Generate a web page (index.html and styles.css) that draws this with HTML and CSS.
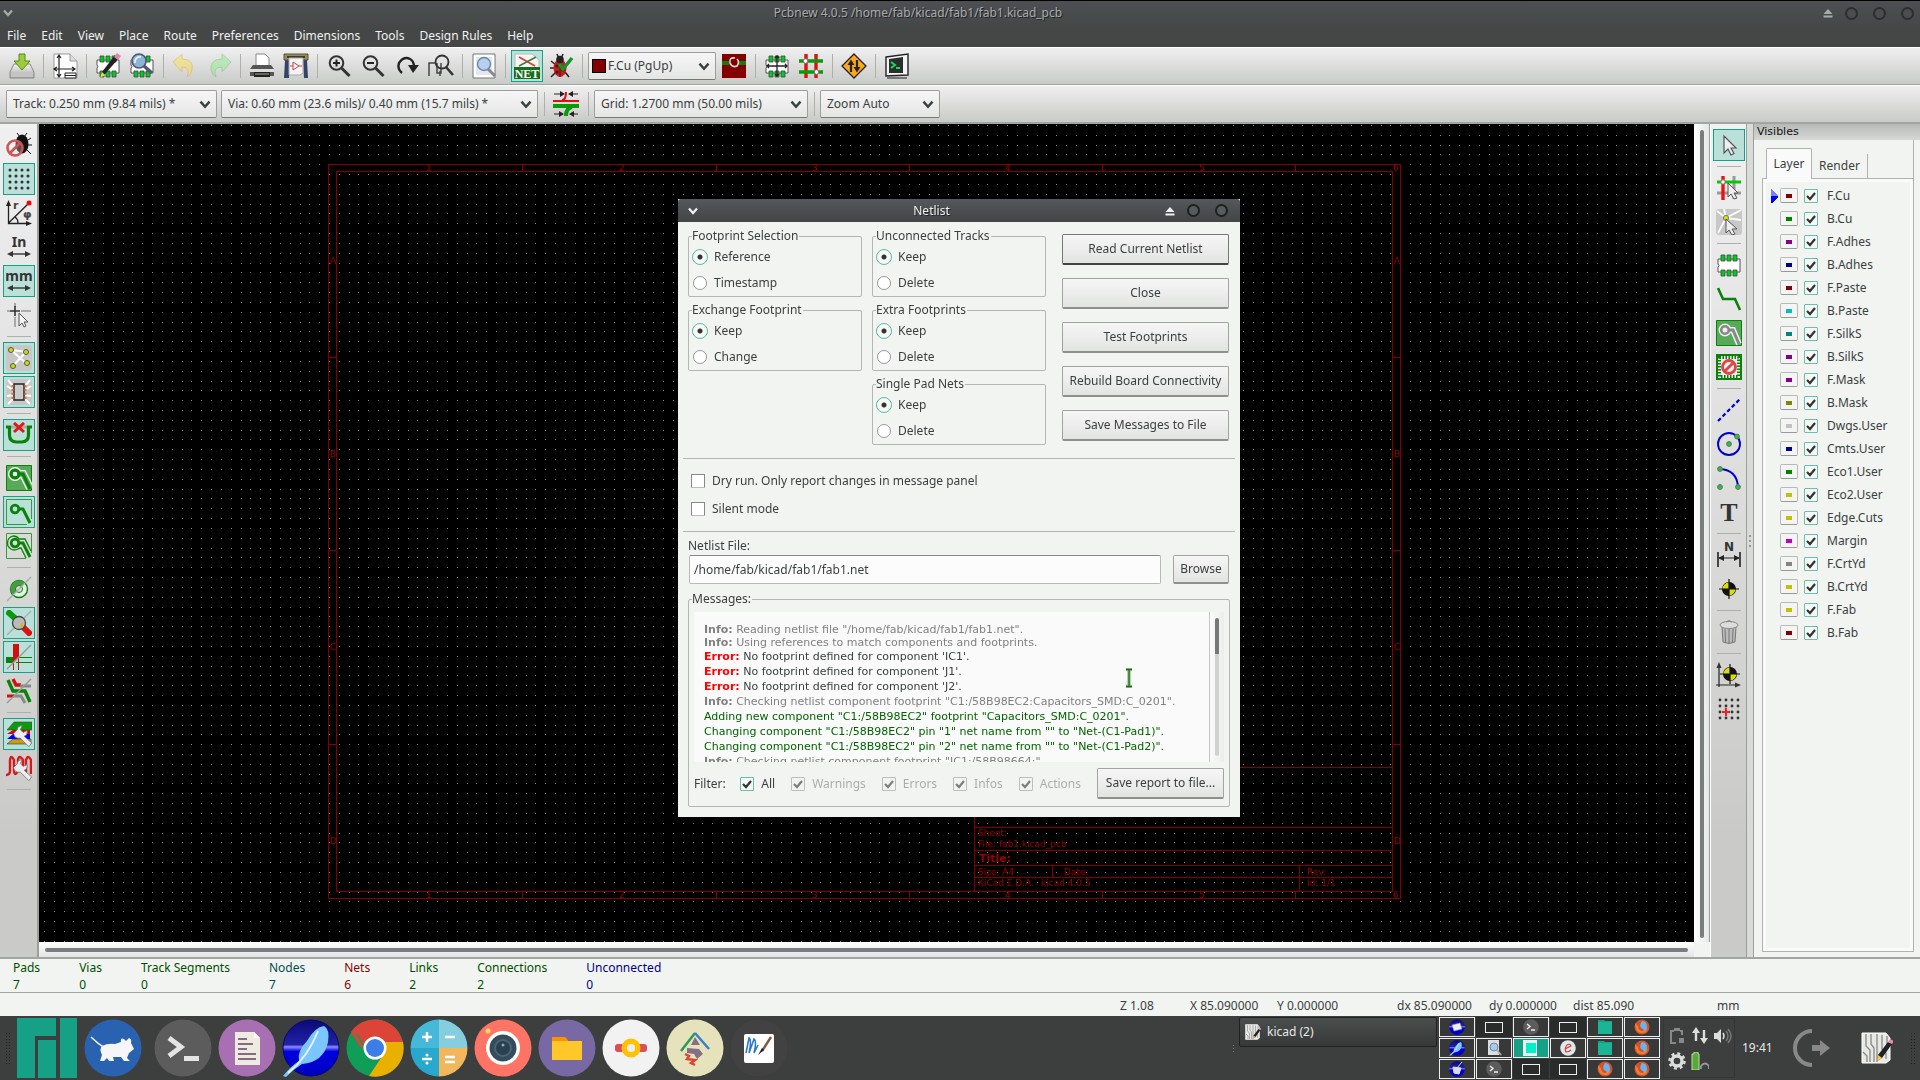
FILE: index.html
```html
<!DOCTYPE html>
<html lang="en">
<head>
<meta charset="utf-8">
<title>Pcbnew 4.0.5 /home/fab/kicad/fab1/fab1.kicad_pcb</title>
<link rel="stylesheet" href="styles.css">
</head>
<body>
<svg class="defs" aria-hidden="true">
  <defs>
    <linearGradient id="blueball" x1="0" y1="0" x2="0" y2="1"><stop offset="0" stop-color="#0a0a78"/><stop offset=".44" stop-color="#2222a8"/><stop offset=".48" stop-color="#8c8cff"/><stop offset=".56" stop-color="#0000e0"/><stop offset="1" stop-color="#0000c0"/></linearGradient>
    <linearGradient id="silver" x1="0" y1="0" x2="0" y2="1"><stop offset="0" stop-color="#f4f4f4"/><stop offset="1" stop-color="#a8a8a8"/></linearGradient>
  </defs>
  <symbol id="chevron" viewBox="0 0 10 8"><path d="M1 1.500l4 4.500 4-4.500" fill="none" stroke="currentColor" stroke-width="2.200"/></symbol>
  <symbol id="eject" viewBox="0 0 10 10"><path d="M5 1l4.500 5h-9zM.5 7.500h9v2h-9z" fill="currentColor"/></symbol>
  <symbol id="pointer" viewBox="0 0 26 26"><path d="M8 4v17l4-4 3 6 3-1.500-3-5.500h5z" fill="#eee" stroke="#555" stroke-width="1.200"/></symbol>
  <symbol id="chip" viewBox="0 0 26 26"><path d="M2 7h22v13H2v-5q2-1 0-3z" fill="#fff" stroke="#555"/><g fill="#0c2" stroke="#444" stroke-width=".8"><path d="M5 3h4v6H5zM11 3h4v6h-4zM17 3h4v6h-4zM5 18h4v6H5zM11 18h4v6h-4zM17 18h4v6h-4z"/></g></symbol>
  <symbol id="lens" viewBox="0 0 26 26"><circle cx="10.500" cy="10" r="6.800" fill="none" stroke="#333" stroke-width="2"/><path d="M15.500 15l8 8" stroke="#333" stroke-width="3"/></symbol>
  <symbol id="target" viewBox="0 0 26 26"><circle cx="13" cy="13" r="7" fill="#111"/><path d="M13 13V6.500A6.500 6.500 0 0 0 6.500 13zM13 13v6.500a6.500 6.500 0 0 0 6.500-6.500z" fill="#dd0"/><path d="M13 3v20M3 13h20" stroke="#111" stroke-width="1.200"/></symbol>
  <symbol id="wrench" viewBox="0 0 26 26"><path d="M11 8q0-4 5-4l-2 4 3 3 4-2q1 5-3 6l8 7-3 4-9-9q-6 1-7-5z" transform="translate(1 1) scale(.95)" fill="#eee" stroke="#777" stroke-width=".9"/></symbol>
  <symbol id="firefox" viewBox="0 0 16 16"><circle cx="8" cy="8" r="7.500" fill="#d4502a"/><path d="M8 2q5 0 5 6 0 4-4 5 2-3-2-4-2-3 1-7z" fill="#6ab4ea"/><path d="M1 4q0 10 7 10 5 0 6-5-2 3-5 3-5 0-5-5z" fill="#f08030"/></symbol>
  <symbol id="folder" viewBox="0 0 16 16"><path d="M1 1h6l1 1h7v13H1z" fill="#16a085"/><path d="M1 3h14v12H1z" fill="#1bb596"/></symbol>
  <symbol id="term" viewBox="0 0 16 16"><circle cx="8" cy="8" r="7.800" fill="#5c5c5c"/><path d="M4 5l3 2.500L4 10M8 11h4" fill="none" stroke="#eee" stroke-width="1.400"/></symbol>
  <symbol id="feather" viewBox="0 0 58 58"><circle cx="29" cy="29" r="28" fill="url(#blueball)" stroke="#06066a"/><path d="M1 57q8-10 16-15-2-10 8-20Q33 8 42 7q6 3 4 16-4 20-26 22Q12 50 4 58z" fill="#7cc6ff"/><path d="M6 54q20-16 30-42" stroke="#e4f6ff" stroke-width="2" fill="none"/></symbol>
  <symbol id="board" viewBox="0 0 32 32"><path d="M1 1h24l4 5v22l-4 3H1z" fill="#e8e8e6" stroke="#fff"/><path d="M5 2v12l4 4v12M10 2v10l3 4v14M16 2v28M21 3v14l4 4v6M26 4v12M2 20l4 4v6" fill="none" stroke="#888" stroke-width="1.300"/><path d="M27 10l4 2-10 14-5 3 1-6z" fill="#222"/><path d="M27 10l2-3 4 2-2 3z" fill="#e8a"/><path d="M17 23l4 3-5 3z" fill="#fc4"/></symbol>
</svg>

<header class="window-head">
  <div class="titlebar">
    <button class="tb-btn" aria-label="Window menu"><svg class="chev"><use href="#chevron"/></svg></button>
    <h1>Pcbnew 4.0.5 /home/fab/kicad/fab1/fab1.kicad_pcb</h1>
    <div class="tb-right">
      <button class="tb-btn shade" aria-label="Shade"><svg class="ej"><use href="#eject"/></svg></button>
      <button class="knob" aria-label="Minimize"></button><button class="knob" aria-label="Maximize"></button><button class="knob" aria-label="Close window"></button>
    </div>
  </div>
  <nav class="menubar">
    <button>File</button><button>Edit</button><button>View</button><button>Place</button><button>Route</button><button>Preferences</button><button>Dimensions</button><button>Tools</button><button>Design Rules</button><button>Help</button>
  </nav>
</header>

<div class="toolbar">
  <button class="tool" aria-label="Save"><svg viewBox="0 0 26 26"><path d="M5 11h16l4 8v6H1v-6z" fill="url(#silver)" stroke="#888"/><path d="M2 19h22v5H2z" fill="#c4c4c4"/><path d="M10 1h6v7h5l-8 9-8-9h5z" fill="#9ccc3c" stroke="#5a8a18"/></svg></button>
  <i class="sep"></i>
  <button class="tool" aria-label="Page settings"><svg viewBox="0 0 26 26"><path d="M2 1h16l7 7v17H2z" fill="#fff" stroke="#999"/><path d="M18 1v7h7" fill="#ddd" stroke="#999"/><path d="M7 3v20M3 16h19M5 5l2-3 2 3M5 21l2 3 2-3M5 14l-3 2 3 2M20 14l3 2-3 2" fill="none" stroke="#222" stroke-width="1.200"/><path d="M13 20h11v5H13zM13 22.500h11" fill="#fff" stroke="#222"/></svg></button>
  <i class="sep"></i>
  <button class="tool" aria-label="Footprint editor"><svg viewBox="0 0 26 26"><use href="#chip"/><path d="M20 2l4 3L10 21l-5 4 2-6z" fill="#222"/><path d="M19 4l3-4 4 3-3 4z" fill="#d8a"/><path d="M7 19l3 3-5 3z" fill="#ed5"/></svg></button>
  <button class="tool" aria-label="Footprint viewer"><svg viewBox="0 0 26 26"><use href="#chip"/><circle cx="10" cy="8" r="7" fill="#8cb4d4" stroke="#557" stroke-width="1.600"/><path d="M6 10a5 5 0 0 1 6-6" stroke="#def" stroke-width="2" fill="none"/><path d="M15 13l8 7" stroke="#557" stroke-width="3.400"/></svg></button>
  <i class="sep"></i>
  <button class="tool faded" aria-label="Undo"><svg viewBox="0 0 26 26"><path d="M1 9l9-8v5q12 0 10 11-1 5-5 7 4-10-5-10v5z" fill="#fd4" stroke="#da3"/></svg></button>
  <button class="tool faded" aria-label="Redo"><svg viewBox="0 0 26 26"><path d="M25 9l-9-8v5Q4 6 5 17q1 5 5 7-4-10 6-10v5z" fill="#8e8" stroke="#6b6"/></svg></button>
  <i class="sep"></i>
  <button class="tool" aria-label="Print"><svg viewBox="0 0 26 26"><path d="M7 1h9l4 4v8H7z" fill="#fff" stroke="#888"/><path d="M4 12h18l3 4v7H1v-7z" fill="#555"/><path d="M1 16h24v3H1z" fill="#ddd"/><path d="M5 19h16v5H5z" fill="#222"/><path d="M6 21h14" stroke="#aaa"/></svg></button>
  <button class="tool" aria-label="Plot"><svg viewBox="0 0 26 26"><path d="M2 7h4v18H1zM20 7h4l1 18h-4z" fill="#346"/><path d="M1 1h24v6H1z" fill="#986" stroke="#553"/><path d="M4 4h18" stroke="#221" stroke-width="1.500"/><path d="M6 5h14v15l-3 2H6z" fill="#f4f4f4" stroke="#aaa"/><path d="M10 9l6 4-6 4zM7 13h3M16 13h3" fill="none" stroke="#c44"/></svg></button>
  <i class="sep"></i>
  <button class="tool" aria-label="Zoom in"><svg viewBox="0 0 26 26"><use href="#lens"/><path d="M10.500 6.500v7M7 10h7" stroke="#222" stroke-width="2"/></svg></button>
  <button class="tool" aria-label="Zoom out"><svg viewBox="0 0 26 26"><use href="#lens"/><path d="M7 10h7" stroke="#222" stroke-width="2"/></svg></button>
  <button class="tool" aria-label="Redraw"><svg viewBox="0 0 26 26"><path d="M8 20Q3 16 5 10q5-7 11-4 4 2 4 8" fill="none" stroke="#222" stroke-width="2.400"/><path d="M14 12h11l-6 8z" fill="#222"/></svg></button>
  <button class="tool" aria-label="Zoom to fit"><svg viewBox="0 0 26 26"><path d="M1 20V10h7M13 10v10h-4V10M1 18v5M12 18v5" fill="none" stroke="#444" stroke-width="1.500"/><circle cx="14" cy="9" r="6.500" fill="none" stroke="#333" stroke-width="1.800"/><path d="M18 14l7 8" stroke="#333" stroke-width="2.600"/></svg></button>
  <i class="sep"></i>
  <button class="tool" aria-label="Find"><svg viewBox="0 0 26 26"><path d="M2 1h22v24H2z" fill="#fff" stroke="#777"/><path d="M5 4h16v18H5z" fill="#e4e8ee"/><circle cx="13" cy="11" r="6.500" fill="#b8d0ee" stroke="#68a" stroke-width="1.400"/><path d="M17 16l7 7" stroke="#888" stroke-width="3"/></svg></button>
  <i class="sep"></i>
  <button class="tool on" aria-label="Read netlist"><svg viewBox="0 0 26 26"><path d="M1 1h17l7 6v8H1z" fill="#f6f6f2" stroke="#bbb"/><path d="M5 4l16 9" stroke="#d33" stroke-width="1.500"/><path d="M5 13l17-9" stroke="#474" stroke-width="1.500"/><path d="M0 14h26v12H0z" fill="#196b1d"/><text x="13" y="24.500" text-anchor="middle" class="net-text">NET</text></svg></button>
  <button class="tool" aria-label="Design rules check"><svg viewBox="0 0 26 26"><path d="M3 8l5 4M2 15h6M3 24l5-5M18 12l4-3M17 19l4 5M9 1l2 5M15 1l-2 5" stroke="#222" stroke-width="1.500"/><ellipse cx="12" cy="15" rx="6.500" ry="9" fill="#d01818"/><circle cx="12" cy="6.500" r="3.800" fill="#222"/><path d="M12 8v16" stroke="#222"/><g fill="#222"><circle cx="9" cy="13" r="1.600"/><circle cx="15" cy="17" r="1.600"/><circle cx="9" cy="19" r="1.600"/></g><path d="M11 11l4 5 9-11" stroke="#18932a" stroke-width="3.400" fill="none"/></svg></button>
  <i class="sep"></i>
  <span class="combo w-layer"><i class="swatch-lg"></i><select aria-label="Active layer"><option>F.Cu (PgUp)</option></select><svg class="chev"><use href="#chevron"/></svg></span>
  <button class="tool" aria-label="Layer pair"><svg viewBox="0 0 26 26"><path d="M1 1h24v24H1z" fill="#840000"/><path d="M1 8h7v4H1zM18 8h7v4h-7z" fill="#0a820a"/><path d="M14 5q-6-1-5 5 2 5 7 3 3-4 0-7" fill="none" stroke="#ddd" stroke-width="1.600"/></svg></button>
  <i class="sep"></i>
  <button class="tool" aria-label="Footprint mode"><svg viewBox="0 0 26 26"><use href="#chip"/><path d="M13 3v20M3 13h20M11 5l2-2 2 2M11 21l2 2 2-2M5 11l-2 2 2 2M21 11l2 2-2 2" fill="none" stroke="#222" stroke-width="1.300"/></svg></button>
  <button class="tool" aria-label="Track mode"><svg viewBox="0 0 26 26"><path d="M8 1v24M18 1v24" stroke="#e01010" stroke-width="3.400"/><path d="M1 8h24M1 19h24" stroke="#0a9a0a" stroke-width="3.400"/><g fill="#fff" stroke="#777"><circle cx="7.500" cy="8" r="2.300"/><circle cx="18.500" cy="19" r="2.300"/></g></svg></button>
  <i class="sep"></i>
  <button class="tool" aria-label="FreeRoute"><svg viewBox="0 0 26 26"><path d="M13 1l12 12-12 12L1 13z" fill="#fba81a" stroke="#222" stroke-width="1.300"/><path d="M10 19v-8M16 7v8" stroke="#222" stroke-width="2.200"/><path d="M6.500 12L10 6.500l3.500 5.500zM12.500 14l3.500 5.500 3.500-5.500z" fill="#222"/></svg></button>
  <i class="sep"></i>
  <button class="tool" aria-label="Scripting console"><svg viewBox="0 0 26 26"><path d="M2 4l22-3v21L2 23z" fill="#f4f4f4" stroke="#222" stroke-width="1.400"/><path d="M5 6l14-2v16H5z" fill="#2a2e2e"/><path d="M7 9l4 3-4 3M12 15h4" fill="none" stroke="#1d5" stroke-width="2"/><path d="M3 25h20" stroke="#777" stroke-width="2"/></svg></button>
</div>

<div class="toolbar second">
  <span class="combo w-track"><select aria-label="Track width"><option>Track: 0.250 mm (9.84 mils) *</option></select><svg class="chev"><use href="#chevron"/></svg></span>
  <span class="combo w-via"><select aria-label="Via size"><option>Via: 0.60 mm (23.6 mils)/ 0.40 mm (15.7 mils) *</option></select><svg class="chev"><use href="#chevron"/></svg></span>
  <i class="sep"></i>
  <button class="tool" aria-label="Auto track width"><svg viewBox="0 0 26 26"><path d="M0 10h26" stroke="#e01010" stroke-width="2"/><path d="M0 15h26" stroke="#0a9a0a" stroke-width="4"/><path d="M9 9q4 0 4-8" fill="none" stroke="#e01010" stroke-width="2"/><path d="M19 16q-6 1-6 9" fill="none" stroke="#0a9a0a" stroke-width="4"/><path d="M1 3h9M25 3h-8M1 23h9M25 23h-8" stroke="#222"/><path d="M7 0l5 3-5 3zM20 0l-5 3 5 3zM6 20l5 3-5 3zM21 20l-5 3 5 3z" fill="#222"/></svg></button>
  <i class="sep"></i>
  <span class="combo w-grid"><select aria-label="Grid"><option>Grid: 1.2700 mm (50.00 mils)</option></select><svg class="chev"><use href="#chevron"/></svg></span>
  <i class="sep"></i>
  <span class="combo w-zoom"><select aria-label="Zoom"><option>Zoom Auto</option></select><svg class="chev"><use href="#chevron"/></svg></span>
</div>

<main class="workspace">
  <aside class="side">
    <button class="tool" aria-label="DRC off"><svg viewBox="0 0 26 26"><path d="M11 1l3 4M21 1l-3 4M22 8l3-2M22 13h4M21 18l4 4" stroke="#111"/><ellipse cx="16" cy="12" rx="6.500" ry="9.500" fill="#111"/><circle cx="9" cy="16" r="7.500" fill="#eee" fill-opacity=".3" stroke="#c55" stroke-width="2.600"/><path d="M4 21L14 11" stroke="#c55" stroke-width="2.600"/></svg></button>
    <button class="tool on" aria-label="Grid"><svg viewBox="0 0 26 26"><path d="M4 4h20M4 10h20M4 16h20M4 22h20" stroke="#333" stroke-width="3" stroke-linecap="round" stroke-dasharray="0 6"/></svg></button>
    <button class="tool" aria-label="Polar coordinates"><svg viewBox="0 0 26 26"><path d="M2.500 4v19.500H22M2.500 23L23 3M9 17q3 2 3 6" fill="none" stroke="#222" stroke-width="1.300"/><path d="M0 6l2.500-6L5 6zM20 21l6 2.500-6 2.500z" fill="#222"/><circle cx="23" cy="3" r="2.500" fill="#f00"/><text x="7" y="9" class="ic-text">r</text><text x="17" y="18" class="ic-text">φ</text></svg></button>
    <button class="tool" aria-label="Inches"><svg viewBox="0 0 26 26"><text x="13" y="13" text-anchor="middle" class="unit-text">In</text><path d="M4 20h18" stroke="#333" stroke-width="1.400"/><path d="M7 17l-6 3 6 3zM19 17l6 3-6 3z" fill="#333"/></svg></button>
    <button class="tool on" aria-label="Millimeters"><svg viewBox="0 0 26 26"><text x="13" y="13" text-anchor="middle" class="unit-text">mm</text><path d="M4 20h18" stroke="#333" stroke-width="1.400"/><path d="M7 17l-6 3 6 3zM19 17l6 3-6 3z" fill="#333"/></svg></button>
    <button class="tool" aria-label="Cursor shape"><svg viewBox="0 0 26 26"><path d="M9 1v4M1 9h3M15 9h10M9 15v10" stroke="#999" stroke-width="1.600"/><path d="M9 4v10M4 9h10" stroke="#333" stroke-width="1.600"/><path d="M13 11v13l3-3 2 4 2-1-2-4h4z" fill="#f4f4f4" stroke="#555"/></svg></button>
    <i class="hsep"></i>
    <button class="tool on" aria-label="Ratsnest"><svg viewBox="0 0 26 26"><rect width="26" height="26" rx="3" fill="#c8c8c8"/><path d="M5 5l18 2M5 5l16 14M7 21L20 7" stroke="#fff" stroke-width="2.200"/><g fill="#c8e000" stroke="#555"><circle cx="5" cy="5" r="2.500"/><circle cx="20" cy="7" r="2.500"/><circle cx="21" cy="18" r="2.500"/><circle cx="7" cy="21" r="2.500"/></g></svg></button>
    <button class="tool on" aria-label="Module ratsnest"><svg viewBox="0 0 26 26"><rect width="26" height="26" rx="3" fill="#c8c8c8"/><path d="M7 7L2 1M7 11L1 7M7 16l-6 1M7 20l-5 5M19 7l5-6M19 11l6-4M19 16l6 1M19 20l5 5" stroke="#fff" stroke-width="2"/><path d="M8 5h10v16H8z" fill="#ccc" stroke="#222" stroke-width="1.400"/><path d="M6.500 6v16M19.500 6v16" stroke="#e07030" stroke-width="2.200" stroke-dasharray="2 2"/></svg></button>
    <i class="hsep"></i>
    <button class="tool on" aria-label="Auto delete track"><svg viewBox="0 0 26 26"><path d="M5 5h16" stroke="#aaa" stroke-width="3"/><path d="M0 5h3.500v8q0 7 7 7h5q7 0 7-7V5H26" fill="none" stroke="#0a820a" stroke-width="3.200"/><path d="M8 1l10 9M18 1L8 10" stroke="#e01818" stroke-width="3"/></svg></button>
    <i class="hsep"></i>
    <button class="tool" aria-label="Show zones"><svg viewBox="0 0 26 26"><path d="M.5.5h25v25H.5z" fill="#5aa85a" stroke="#0a820a"/><path d="M9 9h8l7 14" stroke="#fff" stroke-width="8" fill="none"/><circle cx="9" cy="9" r="7" fill="#fff"/><path d="M9 9h8l7 14" stroke="#5aa85a" stroke-width="5.500" fill="none"/><circle cx="9" cy="9" r="5.800" fill="#5aa85a"/><path d="M12 9h5l7 15" stroke="#0a820a" stroke-width="3" fill="none"/><circle cx="9" cy="9" r="3.800" fill="#fff" stroke="#0a820a" stroke-width="3"/></svg></button>
    <button class="tool on" aria-label="Hide zones"><svg viewBox="0 0 26 26"><path d="M21 25.500H.5V.5h25V20" fill="none" stroke="#3a9a3a"/><path d="M12 10h5l7 14" stroke="#0a820a" stroke-width="3" fill="none"/><circle cx="9" cy="10" r="3.800" fill="none" stroke="#0a820a" stroke-width="2.800"/></svg></button>
    <button class="tool" aria-label="Zone outlines"><svg viewBox="0 0 26 26"><path d="M20 25.500H.5V.5h25V20" fill="none" stroke="#3a9a3a"/><path d="M12 10h5l7 14" stroke="#0a820a" stroke-width="3" fill="none"/><circle cx="9" cy="10" r="3.800" fill="none" stroke="#0a820a" stroke-width="2.800"/><path d="M20 25L15 15q-2 0-3 1-6 3-10-3Q0 5 7 3q4 0 6 3h6l6 12" fill="none" stroke="#0a820a" stroke-width="1.300"/></svg></button>
    <i class="hsep"></i>
    <button class="tool" aria-label="Via sketch"><svg viewBox="0 0 26 26"><circle cx="13" cy="13" r="8.500" fill="#e4f2e4" stroke="#0a820a" stroke-width="1.400"/><path d="M7 19A8 8 0 0 1 19 7z" fill="#4a9a4a"/><circle cx="13" cy="13" r="3.500" fill="#ddd" stroke="#0a820a"/><path d="M1 25L25 1" stroke="#aaa" stroke-width="1.300"/></svg></button>
    <button class="tool on" aria-label="Pad sketch"><svg viewBox="0 0 26 26"><path d="M1 25L25 1" stroke="#aaa" stroke-width="1.300"/><path d="M1 1l10 9" stroke="#0a9a0a" stroke-width="6"/><path d="M15 15l10 10" stroke="#e01010" stroke-width="6"/><circle cx="13" cy="13" r="6.500" fill="#bbb" stroke="#444" stroke-width="1.300"/><path d="M13 16l4-4v6z" fill="#cb2"/></svg></button>
    <button class="tool on" aria-label="Track sketch"><svg viewBox="0 0 26 26"><path d="M0 13h8v6H0z" fill="#0a820a"/><path d="M7 0h6v13l-6 5z" fill="#d01010"/><path d="M13 13.500h13M10 18.500h16" stroke="#0a820a"/><path d="M7.500 17v9M12.500 14v12" stroke="#d01010"/><path d="M1 25L25 1" stroke="#999" stroke-width="1.400"/></svg></button>
    <button class="tool" aria-label="High contrast"><svg viewBox="0 0 26 26"><path d="M7 1l3 6h5" fill="none" stroke="#d01010" stroke-width="3.400"/><path d="M14 8h11M7 18h8l4 7" fill="none" stroke="#888" stroke-width="3"/><path d="M1 18h7" stroke="#d01010" stroke-width="3"/><path d="M2 2l5 11h12l5 11" fill="none" stroke="#0a820a" stroke-width="3.400"/><path d="M1 25L25 1" stroke="#999" stroke-width="1.400"/></svg></button>
    <i class="hsep"></i>
    <button class="tool on" aria-label="Layers manager"><svg viewBox="0 0 26 26"><path d="M7 18h18v5H1z" fill="#caa008" stroke="#333" stroke-width=".6"/><path d="M7 13h17v5H1z" fill="#00f"/><path d="M7 9h17v4H1z" fill="#d00"/><path d="M8 1h18v8H1z" fill="#0a9a0a" stroke="#444" stroke-width=".6"/><use href="#wrench"/></svg></button>
    <button class="tool" aria-label="Microwave toolbar"><svg viewBox="0 0 26 26"><path d="M0 20q4 0 4-4V5q1-6 4 0v11q1 6 4 0V5q1-6 5 0v10M20 18V5q2-6 5 0v14" fill="none" stroke="#d81818" stroke-width="2.400"/><use href="#wrench"/></svg></button>
    <i class="hsep"></i>
  </aside>

  <section class="editor">
    <div class="board-view">
      <canvas id="grid"></canvas>
      <svg class="sheet" width="1655" height="818">
        <g fill="none" stroke="#840000" shape-rendering="crispEdges">
          <path d="M289.500 40.500h1072v734H289.500zM297.500 47.500h1056v720H297.500z"/>
          <path d="M289 233.500h8M289 426.500h8M289 620.500h8M1353 233.500h8M1353 426.500h8M1353 620.500h8M483.500 40v7M677.500 40v7M870.500 40v7M1063.500 40v7M1256.500 40v7M483.500 767v7M677.500 767v7M870.500 767v7M1063.500 767v7M1256.500 767v7"/>
          <path d="M935.500 767V643.500h418M935 703.500h418M935 726.500h418M935 741.500h418M935 753.500h418M1013.500 741v12M1260.500 741v26"/>
        </g>
        <g class="sheet-text">
          <text x="291" y="140">A</text><text x="291" y="333">B</text><text x="291" y="526">C</text><text x="291" y="720">D</text>
          <text x="1355" y="140">A</text><text x="1355" y="333">B</text><text x="1355" y="526">C</text><text x="1355" y="720">D</text>
          <text x="387" y="47">1</text><text x="580" y="47">2</text><text x="773" y="47">3</text><text x="966" y="47">4</text><text x="1160" y="47">5</text><text x="1354" y="47">6</text>
          <text x="387" y="774">1</text><text x="580" y="774">2</text><text x="773" y="774">3</text><text x="966" y="774">4</text><text x="1160" y="774">5</text><text x="1354" y="774">6</text>
          <text x="939" y="712">Sheet:</text><text x="939" y="723">File: fab1.kicad_pcb</text>
          <text x="940" y="738" class="title">Title:</text>
          <text x="939" y="751">Size: A4</text><text x="1025" y="751">Date:</text><text x="1268" y="751">Rev:</text>
          <text x="939" y="762">KiCad E.D.A.</text><text x="1002" y="762">kicad 4.0.5</text><text x="1268" y="762">Id: 1/1</text>
        </g>
      </svg>
    </div>
    <div class="vscroll"><i></i></div>
    <div class="hscroll"><i></i></div>
  </section>

  <aside class="side right">
    <button class="tool on" aria-label="Select"><svg viewBox="0 0 26 26"><use href="#pointer"/></svg></button>
    <i class="hsep"></i>
    <button class="tool" aria-label="Highlight net"><svg viewBox="0 0 26 26"><path d="M18 1v23M1 18h24" stroke="#999" stroke-width="3"/><path d="M7 1v24" stroke="#f01010" stroke-width="3.400"/><path d="M1 7h24" stroke="#0c0" stroke-width="3"/><circle cx="7" cy="7" r="2.200" fill="#fff" stroke="#777"/><path d="M12 8v14l3-3 3 5 3-1-3-5h4z" fill="#eee" stroke="#555"/></svg></button>
    <button class="tool" aria-label="Local ratsnest"><svg viewBox="0 0 26 26"><rect width="26" height="26" rx="3" fill="#c8c8c8"/><path d="M10 9L1 2M10 9l15-8M10 9l15 2M10 9L2 24M10 9L8 0" stroke="#fff" stroke-width="1.800"/><circle cx="10" cy="9" r="2.600" fill="#dde000" stroke="#777"/><path d="M10 10v14l3-3 3 5 3-1-3-5h5z" fill="#eee" stroke="#555"/></svg></button>
    <i class="hsep"></i>
    <button class="tool" aria-label="Add footprint"><svg viewBox="0 0 26 26"><use href="#chip"/></svg></button>
    <button class="tool" aria-label="Add track"><svg viewBox="0 0 26 26"><path d="M2 2l5 11h12l5 11" fill="none" stroke="#0a820a" stroke-width="2.600"/></svg></button>
    <button class="tool" aria-label="Add zone"><svg viewBox="0 0 26 26"><path d="M.5.5h25v25H.5z" fill="#5aa85a" stroke="#0a820a"/><path d="M9 10h8l6 14" stroke="#eee" stroke-width="6" fill="none"/><circle cx="9" cy="10" r="6.500" fill="#eee"/><path d="M12 10h5l6 14" stroke="#888" stroke-width="3" fill="none"/><circle cx="9" cy="10" r="3.800" fill="none" stroke="#888" stroke-width="2.600"/></svg></button>
    <button class="tool" aria-label="Add keepout"><svg viewBox="0 0 26 26"><path d="M1 1h24v24H1z" fill="#eee" stroke="#0a820a" stroke-width="2"/><path d="M3.500 3.500h19v19h-19z" fill="none" stroke="#0a820a" stroke-width="3" stroke-dasharray="1.500 1.500"/><circle cx="13" cy="13" r="6.500" fill="#eee" stroke="#d44" stroke-width="2.800"/><path d="M8 18L18 8" stroke="#d44" stroke-width="2.800"/></svg></button>
    <i class="hsep"></i>
    <button class="tool" aria-label="Add line"><svg viewBox="0 0 26 26"><path d="M2 24L24 2" stroke="#00c" stroke-width="2.200" stroke-dasharray="4 2.500"/></svg></button>
    <button class="tool" aria-label="Add circle"><svg viewBox="0 0 26 26"><circle cx="13" cy="13" r="11" fill="none" stroke="#00c" stroke-width="1.900"/><g fill="#3b4" stroke="#575"><circle cx="13" cy="13" r="2.400"/><circle cx="21" cy="5.500" r="2.400"/></g></svg></button>
    <button class="tool" aria-label="Add arc"><svg viewBox="0 0 26 26"><path d="M4 4q17 1 18 18" fill="none" stroke="#00c" stroke-width="1.900"/><g fill="#3b4" stroke="#575"><circle cx="4" cy="4" r="2.400"/><circle cx="4" cy="22" r="2.400"/><circle cx="22" cy="22" r="2.400"/></g></svg></button>
    <button class="tool" aria-label="Add text"><svg viewBox="0 0 26 26"><text x="13" y="22" text-anchor="middle" class="t-text">T</text></svg></button>
    <i class="hsep"></i>
    <button class="tool" aria-label="Add dimension"><svg viewBox="0 0 26 26"><text x="13" y="9" text-anchor="middle" class="n-text">N</text><path d="M2 10v15M24 10v15" stroke="#222" stroke-width="1.600"/><path d="M3 16h20" stroke="#222"/><path d="M8 13l-6 3 6 3zM18 13l6 3-6 3z" fill="#222"/></svg></button>
    <button class="tool" aria-label="Add target"><svg viewBox="0 0 26 26"><use href="#target"/></svg></button>
    <i class="hsep"></i>
    <button class="tool" aria-label="Delete"><svg viewBox="0 0 26 26"><path d="M6 8h14l-1 15q-6 3-12 0z" fill="#bbb" stroke="#777"/><path d="M9 10l.5 13M13 10v14M17 10l-.5 13" stroke="#777"/><ellipse cx="13" cy="6" rx="9" ry="3.500" fill="#ddd" stroke="#888"/><path d="M10 3q3-3 6 0" fill="none" stroke="#888"/></svg></button>
    <i class="hsep"></i>
    <button class="tool" aria-label="Drill origin"><svg viewBox="0 0 26 26"><path d="M3 25V4M0 23h20" stroke="#222" stroke-width="1.200"/><path d="M.5 6L3 0l2.500 6zM19 20.500l6 2.500-6 2.500z" fill="#333"/><use href="#target" x="1" y="-1"/></svg></button>
    <button class="tool" aria-label="Grid origin"><svg viewBox="0 0 26 26"><path d="M4 4h20M4 10h20M4 16h20M4 22h20" stroke="#333" stroke-width="2.800" stroke-linecap="round" stroke-dasharray="0 6"/><path d="M10 12v8M6 16h8" stroke="#e22" stroke-width="2"/></svg></button>
  </aside>
  <div class="sash"><i></i></div>

  <aside class="visibles">
    <h2>Visibles</h2>
    <div class="tabs"><button class="tab active">Layer</button><button class="tab">Render</button></div>
    <ul class="layers">
      <li class="current"><button class="sw cu" aria-label="F.Cu color"></button><label><input type="checkbox" checked>F.Cu</label></li>
      <li><button class="sw green" aria-label="B.Cu color"></button><label><input type="checkbox" checked>B.Cu</label></li>
      <li><button class="sw purple" aria-label="F.Adhes color"></button><label><input type="checkbox" checked>F.Adhes</label></li>
      <li><button class="sw navy" aria-label="B.Adhes color"></button><label><input type="checkbox" checked>B.Adhes</label></li>
      <li><button class="sw cu" aria-label="F.Paste color"></button><label><input type="checkbox" checked>F.Paste</label></li>
      <li><button class="sw cyan" aria-label="B.Paste color"></button><label><input type="checkbox" checked>B.Paste</label></li>
      <li><button class="sw teal" aria-label="F.SilkS color"></button><label><input type="checkbox" checked>F.SilkS</label></li>
      <li><button class="sw purple" aria-label="B.SilkS color"></button><label><input type="checkbox" checked>B.SilkS</label></li>
      <li><button class="sw purple" aria-label="F.Mask color"></button><label><input type="checkbox" checked>F.Mask</label></li>
      <li><button class="sw olive" aria-label="B.Mask color"></button><label><input type="checkbox" checked>B.Mask</label></li>
      <li><button class="sw silver" aria-label="Dwgs.User color"></button><label><input type="checkbox" checked>Dwgs.User</label></li>
      <li><button class="sw navy" aria-label="Cmts.User color"></button><label><input type="checkbox" checked>Cmts.User</label></li>
      <li><button class="sw green" aria-label="Eco1.User color"></button><label><input type="checkbox" checked>Eco1.User</label></li>
      <li><button class="sw yellow" aria-label="Eco2.User color"></button><label><input type="checkbox" checked>Eco2.User</label></li>
      <li><button class="sw yellow" aria-label="Edge.Cuts color"></button><label><input type="checkbox" checked>Edge.Cuts</label></li>
      <li><button class="sw magenta" aria-label="Margin color"></button><label><input type="checkbox" checked>Margin</label></li>
      <li><button class="sw gray" aria-label="F.CrtYd color"></button><label><input type="checkbox" checked>F.CrtYd</label></li>
      <li><button class="sw yellow" aria-label="B.CrtYd color"></button><label><input type="checkbox" checked>B.CrtYd</label></li>
      <li><button class="sw yellow" aria-label="F.Fab color"></button><label><input type="checkbox" checked>F.Fab</label></li>
      <li><button class="sw cu" aria-label="B.Fab color"></button><label><input type="checkbox" checked>B.Fab</label></li>
    </ul>
  </aside>
</main>

<dl class="counts">
  <div class="g"><dt>Pads</dt><dd>7</dd></div><div class="g"><dt>Vias</dt><dd>0</dd></div><div class="g"><dt>Track Segments</dt><dd>0</dd></div><div class="c"><dt>Nodes</dt><dd>7</dd></div><div class="r"><dt>Nets</dt><dd>6</dd></div><div class="g"><dt>Links</dt><dd>2</dd></div><div class="g"><dt>Connections</dt><dd>2</dd></div><div class="b"><dt>Unconnected</dt><dd>0</dd></div>
</dl>
<div class="statusbar"><span class="s-z">Z 1.08</span><span class="s-x">X 85.090000</span><span class="s-y">Y 0.000000</span><span class="s-dx">dx 85.090000</span><span class="s-dy">dy 0.000000</span><span class="s-dist">dist 85.090</span><span class="s-mm">mm</span></div>

<footer class="taskbar">
  <i class="grip"></i>
  <button class="menu" aria-label="Applications"><svg viewBox="0 0 60 60"><path d="M0 0h39v18H18v42H0zM21 22h18v38H21zM43 0h17v60H43z" fill="#16a085"/></svg></button>
  <div class="launchers">
    <button class="first" aria-label="Desktop"><svg viewBox="0 0 58 58"><circle cx="29" cy="29" r="28.500" fill="#2962b0"/><path d="M7 18q7 7 14 11" fill="none" stroke="#f6f6f6" stroke-width="1.500"/><path d="M18 27q6-3 13-2l6-2q-1-5 3-3l2 2 3-3q3 1 2 5l3 6-5 4-2 5 3 3-6 0-3-4-8 0 1 4h-5l-2-3-3 3h-4l2-6q-3-6 0-9z" fill="#f6f6f6"/></svg></button>
    <button aria-label="Terminal"><svg viewBox="0 0 58 58"><circle cx="29" cy="29" r="28.500" fill="#5c5c5c"/><path d="M15 19l12 9-12 9" fill="none" stroke="#e4e4e4" stroke-width="5"/><path d="M30 37h15v5H30z" fill="#e4e4e4"/></svg></button>
    <button aria-label="Text editor"><svg viewBox="0 0 58 58"><circle cx="29" cy="29" r="28.500" fill="#a86fb2"/><path d="M17 13h19l6 6v27H17z" fill="#f0ebe0"/><path d="M36 13v6h6z" fill="#fff"/><path d="M20 20h9M20 25h15M20 30h9M20 35h18M20 40h18" stroke="#856a88" stroke-width="2"/></svg></button>
    <button aria-label="Feather"><svg viewBox="0 0 58 58"><use href="#feather"/></svg></button>
    <button aria-label="Chrome"><svg viewBox="0 0 58 58"><circle cx="29" cy="29" r="28.500" fill="#0f9d58"/><path d="M5 13a28.500 28.500 0 0 1 50 5l2 5H29l-14 6z" fill="#db4437"/><path d="M57 23a28.500 28.500 0 0 1-34 34l16-24-2-10z" fill="#eab000"/><path d="M8 10l12 23-3-10z" fill="#0f9d58"/><circle cx="29" cy="29" r="11.500" fill="#fff"/><circle cx="29" cy="29" r="9" fill="#3d7de8"/></svg></button>
    <button aria-label="Calculator"><svg viewBox="0 0 58 58"><path d="M29 29V.5A28.500 28.500 0 0 0 .5 29z" fill="#46b8d8"/><path d="M29 29h28.500A28.500 28.500 0 0 0 29 .5z" fill="#84cee0"/><path d="M29 29v28.500A28.500 28.500 0 0 1 .5 29z" fill="#28a8cc"/><path d="M29 29h28.500A28.500 28.500 0 0 1 29 57.500z" fill="#f2b75c"/><path d="M12 18h10M17 13v10M35 18h10M12 40h10M35 38h10M35 43h10" stroke="#fff" stroke-width="2.500"/><circle cx="17" cy="36" r="1.500" fill="#fff"/><circle cx="17" cy="44" r="1.500" fill="#fff"/></svg></button>
    <button aria-label="Camera"><svg viewBox="0 0 58 58"><circle cx="29" cy="29" r="28.500" fill="#ff7465"/><circle cx="14" cy="12" r="2.500" fill="#fd6"/><circle cx="29" cy="29" r="17" fill="#fff"/><circle cx="29" cy="29" r="13.500" fill="#344c5c"/><circle cx="29" cy="29" r="8" fill="#284050" stroke="#4a6474" stroke-width="2"/><circle cx="29" cy="26" r="1.500" fill="#8ab"/></svg></button>
    <button aria-label="Files"><svg viewBox="0 0 58 58"><circle cx="29" cy="29" r="28.500" fill="#7869a4"/><path d="M14 18h13l3 3v6H14z" fill="#ff9000"/><path d="M14 22h30v19H14z" fill="#ffc828"/></svg></button>
    <button aria-label="Bracelet"><svg viewBox="0 0 58 58"><circle cx="29" cy="29" r="28.500" fill="#f2f2f2"/><rect x="13" y="25" width="32" height="8" rx="3" fill="#de4c54"/><circle cx="29" cy="29" r="6.800" fill="#eee" stroke="#ffc107" stroke-width="5.500"/></svg></button>
    <button aria-label="Inkscape"><svg viewBox="0 0 58 58"><circle cx="29" cy="29" r="28.500" fill="#e6e3bc"/><path d="M15 32l14-18" stroke="#2a9a5a" stroke-width="2.500"/><path d="M29 14l14 16" stroke="#3a80c8" stroke-width="2.500"/><path d="M29 18l5 8h-9zM21 29l12 1 4 5-6 5-3-5-7-1z" fill="#856f86"/><path d="M19 35l4 2-2 3 8 1-4 3 4 2" fill="none" stroke="#d43" stroke-width="2.500"/></svg></button>
    <button aria-label="Notes"><svg viewBox="0 0 58 58"><circle cx="29" cy="29" r="28.500" fill="#424242"/><rect x="14" y="15" width="30" height="29" rx="2" fill="#fff"/><path d="M16 34l3-15q3 2 0 15l5-14q3 2 0 14l4-8" fill="none" stroke="#2a7ac8" stroke-width="1.600"/><path d="M41 18L32 32" stroke="#854" stroke-width="2.400"/><path d="M32 29l-4 7 6-5z" fill="#222"/></svg></button>
  </div>
  <div class="tasks"><i class="dots"></i><button class="task"><svg viewBox="0 0 32 32"><use href="#board"/></svg>kicad (2)</button></div>
  <div class="pager">
    <i><svg viewBox="0 0 16 16"><circle cx="8" cy="8" r="7.800" fill="url(#blueball)"/><path d="M3 6l8-2 2 6-8 2z" fill="#eee" stroke="#999" stroke-width=".6"/></svg></i><i class="idle"></i><i><svg><use href="#term"/></svg></i><i class="idle"></i><i><svg><use href="#folder"/></svg></i><i><svg><use href="#firefox"/></svg></i>
    <i><svg><use href="#feather"/></svg></i><i><svg viewBox="0 0 16 16"><path d="M2 0h11v15H2z" fill="#ddd"/><circle cx="8" cy="7" r="4" fill="#aac8ea" stroke="#68a"/><path d="M11 10l4 5" stroke="#aaa" stroke-width="2"/></svg></i><i class="active"><svg viewBox="0 0 16 16"><path d="M0 0h14v16H0z" fill="#eee"/><path d="M3 3h10v10H3z" fill="#00f0c8"/></svg></i><i><svg viewBox="0 0 16 16"><circle cx="8" cy="8" r="7.800" fill="#dce8ea"/><path d="M5 9l6-3q-1-3-4-1-3 4-1 7 3 0 5-2" fill="none" stroke="#d33" stroke-width="1.100"/></svg></i><i><svg><use href="#folder"/></svg></i><i><svg><use href="#firefox"/></svg></i>
    <i><svg viewBox="0 0 16 16"><circle cx="8" cy="8" r="7.800" fill="url(#blueball)"/><path d="M4 6l8 1-2 6-5-1zM8 7l5-6" fill="#ddd" stroke="#ddd"/></svg></i><i><svg><use href="#term"/></svg></i><i class="idle"></i><i class="idle"></i><i><svg><use href="#firefox"/></svg></i><i><svg><use href="#firefox"/></svg></i>
  </div>
  <div class="tray">
    <svg viewBox="0 0 18 18"><path d="M6 4H3v12h5M12 4h2v4" fill="none" stroke="#888" stroke-width="2"/><path d="M6 1h6v3H6zM11 11h5v5h-5z" fill="#888"/></svg>
    <svg viewBox="0 0 18 18"><path d="M5 14V5M13 3v9" stroke="#ddd" stroke-width="2.400"/><path d="M1 6l4-6 4 6zM9 11l4 6 4-6z" fill="#ddd"/></svg>
    <svg viewBox="0 0 18 18"><path d="M0 6h3l4-4v14l-4-4H0z" fill="#ddd"/><path d="M9 6q2 3 0 6" fill="none" stroke="#ddd" stroke-width="1.500"/><path d="M12 4q4 5 0 10M14 2q6 7 0 14" fill="none" stroke="#777" stroke-width="1.500"/></svg>
    <svg viewBox="0 0 18 18"><circle cx="9" cy="9" r="5" fill="none" stroke="#ddd" stroke-width="3.400"/><circle cx="9" cy="9" r="7.500" fill="none" stroke="#ddd" stroke-width="2.500" stroke-dasharray="3 2.890"/></svg>
    <svg viewBox="0 0 18 18"><path d="M3 0h4v2h1v16H1V2h2z" fill="#5aa838" stroke="#bde0a8"/><path d="M10 17v-3q4-5 8 0v3" fill="none" stroke="#999" stroke-width="1.800"/></svg>
  </div>
  <time class="clock">19:41</time>
  <button class="logout" aria-label="Log out"><svg viewBox="0 0 38 38"><path d="M20 2A17 17 0 0 0 20 36" fill="none" stroke="#888" stroke-width="4"/><path d="M20 16h8v-5l10 8-10 8v-5h-8z" fill="#888"/></svg></button>
  <button class="kicad" aria-label="KiCad"><svg viewBox="0 0 32 32"><use href="#board"/></svg></button>
  <i class="grip"></i>
</footer>

<div class="dialog" role="dialog" aria-labelledby="dlg-title">
  <div class="dlg-title">
    <button class="tb-btn" aria-label="Dialog menu"><svg class="chev"><use href="#chevron"/></svg></button>
    <h2 id="dlg-title">Netlist</h2>
    <div class="tb-right"><button class="tb-btn shade" aria-label="Shade"><svg class="ej"><use href="#eject"/></svg></button><button class="knob" aria-label="Maximize"></button><button class="knob" aria-label="Close dialog"></button></div>
  </div>
  <form class="dlg-body">
    <div class="options">
      <div class="col">
        <fieldset><legend>Footprint Selection</legend><label><input type="radio" name="sel" checked>Reference</label><label><input type="radio" name="sel">Timestamp</label></fieldset>
        <fieldset><legend>Exchange Footprint</legend><label><input type="radio" name="exch" checked>Keep</label><label><input type="radio" name="exch">Change</label></fieldset>
      </div>
      <div class="col">
        <fieldset><legend>Unconnected Tracks</legend><label><input type="radio" name="unc" checked>Keep</label><label><input type="radio" name="unc">Delete</label></fieldset>
        <fieldset><legend>Extra Footprints</legend><label><input type="radio" name="extra" checked>Keep</label><label><input type="radio" name="extra">Delete</label></fieldset>
        <fieldset><legend>Single Pad Nets</legend><label><input type="radio" name="pad" checked>Keep</label><label><input type="radio" name="pad">Delete</label></fieldset>
      </div>
      <div class="actions">
        <button type="button" class="btn default">Read Current Netlist</button><button type="button" class="btn">Close</button><button type="button" class="btn">Test Footprints</button><button type="button" class="btn">Rebuild Board Connectivity</button><button type="button" class="btn">Save Messages to File</button>
      </div>
    </div>
    <hr>
    <div class="checks"><label><input type="checkbox">Dry run. Only report changes in message panel</label><label><input type="checkbox">Silent mode</label></div>
    <hr>
    <label class="file-label" for="netfile">Netlist File:</label>
    <div class="file-row"><input id="netfile" type="text" value="/home/fab/kicad/fab1/fab1.net"><button type="button" class="btn">Browse</button></div>
    <fieldset class="messages"><legend>Messages:</legend>
      <div class="log">
        <div class="log-text">
          <p class="info tight"><b>Info:</b> Reading netlist file "/home/fab/kicad/fab1/fab1.net".</p>
          <p class="info tight"><b>Info:</b> Using references to match components and footprints.</p>
          <p class="error"><b>Error:</b> No footprint defined for component 'IC1'.</p>
          <p class="error"><b>Error:</b> No footprint defined for component 'J1'.</p>
          <p class="error"><b>Error:</b> No footprint defined for component 'J2'.</p>
          <p class="info"><b>Info:</b> Checking netlist component footprint "C1:/58B98EC2:Capacitors_SMD:C_0201".</p>
          <p class="action">Adding new component "C1:/58B98EC2" footprint "Capacitors_SMD:C_0201".</p>
          <p class="action">Changing component "C1:/58B98EC2" pin "1" net name from "" to "Net-(C1-Pad1)".</p>
          <p class="action">Changing component "C1:/58B98EC2" pin "2" net name from "" to "Net-(C1-Pad2)".</p>
          <p class="info"><b>Info:</b> Checking netlist component footprint "IC1:/58B98664:".</p>
        </div>
        <div class="log-scroll"><i></i></div>
        <svg class="ibeam" viewBox="0 0 8 20"><path d="M1 1.500h6M1 18.500h6M4 2v16" stroke="#9c7" stroke-width="3.500"/><path d="M1 1.500h6M1 18.500h6M4 2v16" stroke="#263" stroke-width="1.300"/></svg>
      </div>
      <div class="filter"><span>Filter:</span><label><input type="checkbox" checked>All</label><label class="off"><input type="checkbox" checked disabled>Warnings</label><label class="off"><input type="checkbox" checked disabled>Errors</label><label class="off"><input type="checkbox" checked disabled>Infos</label><label class="off"><input type="checkbox" checked disabled>Actions</label><button type="button" class="btn">Save report to file...</button></div>
    </fieldset>
  </form>
</div>
<script src="grid.js"></script>
</body>
</html>
```
FILE: styles.css
```css
* { box-sizing: border-box; }
body { margin: 0; min-height: 100vh; display: flex; flex-direction: column; background: #f2f4f1; color: #3a3f3f; font: 12px/18px "Noto Sans", sans-serif; overflow: hidden; position: relative; }
button, input, select { font: inherit; color: inherit; margin: 0; }
button { padding: 0; border: 0; background: none; }
h1, h2, p, ul, dl, dd { margin: 0; padding: 0; font: inherit; }
svg { display: block; }
.defs { position: absolute; width: 0; height: 0; }

.window-head { background: linear-gradient(#4d4f53, #444746 60%); border-top: 1px solid #000; height: 47px; color: #f0f0f0; flex: none; }
.titlebar { height: 24px; display: flex; align-items: center; color: #a8abab; }
.titlebar h1, .dlg-title h2 { flex: 1; text-align: center; text-shadow: 1px 1px #222; }
.tb-btn { width: 16px; height: 16px; display: grid; place-items: center; }
.tb-right { display: flex; align-items: center; gap: 15px; padding-right: 6px; }
.shade { margin-right: -6px; }
.chev { width: 10px; height: 8px; }
.ej { width: 10px; height: 10px; }
.knob { width: 13px; height: 13px; border: 2px solid #1e2020; border-radius: 50%; background: #585b5d; }
.titlebar .knob { background: #4b4d4f; border-color: #2c2e2e; }
.menubar { display: flex; gap: 15px; padding-left: 7px; line-height: 22px; }

.toolbar { height: 38px; flex: none; display: flex; align-items: center; gap: 2px; padding-left: 6px; background: linear-gradient(#efefef, #c9cbc8); border-bottom: 1px solid #a3a5a3; border-top: 1px solid #fff; }
.second { gap: 4px; }
.tool { width: 32px; height: 32px; flex: none; display: grid; place-items: center; border: 1px solid transparent; }
.tool svg { width: 26px; height: 26px; }
.tool.on { background: #b9e1d9; border-color: #16a085; }
.faded { opacity: .45; }
.sep { width: 1px; height: 24px; background: #aeb0ae; margin: 0 3px; }
.second .sep { margin: 0 1px 0 2px; }
.combo { position: relative; height: 28px; display: flex; align-items: center; border: 1px solid #9c9e9c; border-bottom-color: #777; border-radius: 2px; background: linear-gradient(#f6f6f6, #e4e6e4); }
.combo select { flex: 1; min-width: 0; appearance: none; border: 0; background: none; padding: 0 0 0 6px; height: 26px; }
.combo .chev { margin-right: 5px; width: 12px; height: 9px; }
.combo.w-layer { width: 128px; }
.w-track { width: 211px; }
.w-via { width: 317px; }
.w-grid { width: 214px; }
.w-zoom { width: 120px; }
.combo.w-layer select { padding-left: 2px; }
.swatch-lg { width: 14px; height: 14px; margin-left: 3px; background: #840000; border: 1px solid #000; }
.net-text { font: bold 12px "Liberation Serif", serif; fill: #fff; }
.ic-text { font: bold 11px "DejaVu Sans", sans-serif; fill: #444; }
.unit-text { font: bold 14px "Noto Sans", sans-serif; fill: #333; }
.t-text { font: bold 26px "Liberation Serif", serif; fill: #333; }
.n-text { font: bold 12px "DejaVu Sans", sans-serif; fill: #333; }

.workspace { flex: 1; display: flex; min-height: 0; border-top: 1px solid #a3a5a3; }
.side { width: 39px; flex: none; display: flex; flex-direction: column; gap: 2px; align-items: center; padding: 5px 1px 0 2px; background: linear-gradient(#f0f0f0, #cacbc9 85%); border-right: 2px solid #9c9e9c; }
.side .hsep { width: 24px; height: 1px; background: #aeb0ae; margin: 3px 0; }
.side.right { width: 37px; border-left: 1px solid #fff; border-right: 1px solid #9c9e9c; padding: 5px 1px 0; }
.editor { flex: 1; min-width: 0; display: grid; grid-template-columns: 1fr 16px; grid-template-rows: 1fr 15px; }
.board-view { position: relative; overflow: hidden; background: #000; }
.board-view canvas { display: block; width: 100%; height: 100%; }
.sheet { position: absolute; left: 0; top: 0; }
.sheet-text { font: 9px "DejaVu Sans", sans-serif; fill: #9c0000; }
.sheet-text .title { font-size: 11px; font-weight: bold; }
.vscroll { background: linear-gradient(90deg, #fff, #e2e8e8); border-right: 1px solid #9c9e9c; padding: 6px 0 4px 6px; }
.vscroll i { display: block; width: 4px; height: 100%; background: #7a7d7b; border-radius: 2px; }
.hscroll { background: linear-gradient(#fff, #e2e4e6); padding: 6px 6px 0; }
.hscroll i { display: block; height: 4px; background: #7a7d7b; border-radius: 2px; }
.sash { width: 7px; flex: none; background: #d9dbd9; display: grid; place-items: center; border-right: 1px solid #9c9e9c; }
.sash i { width: 2px; height: 12px; background: repeating-linear-gradient(#999 0 2px, transparent 2px 5px); }

.visibles { width: 166px; flex: none; display: flex; flex-direction: column; padding-bottom: 5px; }
.visibles h2 { font: 11px/16px "DejaVu Sans", sans-serif; padding-left: 3px; color: #111; background: linear-gradient(#b8bab8, #d6d8d6); }
.tabs { display: flex; align-items: flex-end; height: 39px; margin: 0 6px 0 8px; padding-left: 4px; border-bottom: 1px solid #b0b2b0; border-right: 1px solid #b0b2b0; }
.tab { width: 56px; height: 24px; border-right: 1px solid #b0b2b0; }
.tab.active { width: 46px; height: 31px; margin-bottom: -1px; border: 1px solid #b0b2b0; border-bottom: 0; border-radius: 2px 2px 0 0; background: #fafafa; }
.layers { flex: 1; list-style: none; margin: 0 6px 0 8px; padding: 5px 0 0; border: 1px solid #b0b2b0; border-top: 0; background: #f2f4f1; box-shadow: inset 0 0 0 3px #fafafa; }
.layers li { height: 23px; display: flex; align-items: center; gap: 6px; padding-left: 17px; }
.layers .current { background: conic-gradient(from 225deg at 100% 50%, transparent 0 0, #00f 0 45deg, #8080f0 45deg 90deg, transparent 0) 8px 5px / 8px 14px no-repeat; }
.layers label { display: flex; align-items: center; gap: 9px; }
.sw { width: 18px; height: 15px; border: 1px solid #b8bab8; border-bottom-color: #999; border-radius: 2px; display: grid; place-items: center; background: #f4f4f4; }
.sw::before { content: ""; width: 6px; height: 4px; background: var(--c); }
.cu { --c: #840000; } .green { --c: #008400; } .purple { --c: #840084; } .navy { --c: #000084; } .cyan { --c: #00c2c2; } .teal { --c: #008484; } .olive { --c: #848400; } .silver { --c: #c2c2c2; } .yellow { --c: #c2c200; } .magenta { --c: #c200c2; } .gray { --c: #848484; }

input[type=checkbox] { appearance: none; width: 14px; height: 14px; flex: none; border: 1px solid #888; border-bottom-color: #bbb; border-radius: 1px; background: #fff; }
input[type=checkbox]:checked { border-color: #6bbfae; background: url("data:image/svg+xml,%3Csvg xmlns='http://www.w3.org/2000/svg' viewBox='0 0 12 12'%3E%3Cpath d='M2 6l3 3 5-6' fill='none' stroke='%23333' stroke-width='2.200'/%3E%3C/svg%3E") #f6f8f6; }
input[type=checkbox]:disabled { border-color: #999; background-color: #f2f4f1; opacity: .6; }
input[type=radio] { appearance: none; width: 14px; height: 14px; margin: 0 1px; flex: none; border: 1px solid #999; border-radius: 50%; background: #fff; }
input[type=radio]:checked { width: 16px; height: 16px; margin: 0; border-color: #5bb9a6; background: radial-gradient(circle, #333 2px, #f6f8f6 3px); }

.counts { display: flex; gap: 39px; height: 36px; flex: none; padding: 0 13px; border-top: 2px solid #a3a5a3; border-bottom: 1px solid #a3a5a3; line-height: 17px; }
.counts .g { color: #004f00; } .counts .c { color: #004f4f; } .counts .r { color: #8b0000; } .counts .b { color: #00008b; }
.statusbar { display: flex; justify-content: flex-end; height: 23px; flex: none; line-height: 25px; }
.s-z { width: 70px; } .s-x { width: 87px; } .s-y { width: 120px; } .s-dx { width: 92px; } .s-dy { width: 84px; } .s-dist { width: 144px; } .s-mm { width: 203px; }

.taskbar { height: 64px; flex: none; display: flex; align-items: center; background: #3c3f3e; color: #e8e8e8; }
.grip { width: 5px; height: 32px; margin: 0 5px; background: radial-gradient(circle, #222 1px, transparent 1px) 0 0 / 3px 3px; }
.menu { width: 60px; height: 60px; margin: 0 7px 0 2px; }
.launchers { display: flex; gap: 6px; }
.launchers button { width: 58px; height: 58px; }
.launchers .first { margin-right: 6px; }
.tasks { flex: 1; display: flex; justify-content: flex-end; align-items: center; gap: 3px; padding-right: 2px; }
.task { width: 198px; height: 30px; margin-bottom: 32px; display: flex; align-items: center; gap: 6px; padding-left: 5px; border: 1px solid #222; border-radius: 2px; background: linear-gradient(#4a4e4d, #363938); }
.task svg { width: 16px; height: 16px; }
.dots { width: 4px; height: 8px; background: radial-gradient(circle, #777 1px, transparent 1px) 0 0 / 3px 3px; }
.pager { display: grid; grid-template-columns: repeat(6, 36px); grid-auto-rows: 20px; gap: 1px; }
.pager i { border: 1px solid #eee; background: #363938; display: grid; place-items: center; }
.pager svg { width: 16px; height: 16px; }
.pager .idle { background: #2a2c2b; border-color: #2a2c2b; }
.pager .idle::before { content: ""; width: 16px; height: 9px; border: 1px solid #eee; }
.pager .active { background: #16a085; }
.tray { width: 72px; height: 60px; margin: 0 7px 0 3px; padding: 8px 0 0 4px; border: 1px solid #333635; display: grid; grid-template-columns: repeat(3, 18px); grid-auto-rows: 18px; gap: 7px 5px; }
.clock { width: 50px; }
.logout svg { width: 38px; height: 38px; }
.kicad { margin: 0 12px 0 31px; }
.kicad svg { width: 32px; height: 32px; }

.dialog { position: absolute; left: 678px; top: 199px; width: 562px; background: #f2f4f1; }
.dlg-title { height: 23px; display: flex; align-items: center; padding-left: 7px; color: #f0f0f0; background: linear-gradient(#55585c, #424445); border-radius: 3px 3px 0 0; }
.dlg-title .tb-right { padding-right: 12px; }
.dlg-body { padding: 5px 10px 10px; }
.options { display: grid; grid-template-columns: 174px 174px 1fr; gap: 10px; }
.col { display: flex; flex-direction: column; gap: 4px; }
fieldset { margin: 0; padding: 0 3px; border: 1px solid #b4b6b4; border-radius: 2px; min-width: 0; }
legend { padding: 0 1px 0 0; height: 18px; }
fieldset label { display: flex; align-items: center; gap: 6px; height: 26px; }
legend + label { margin-top: -1px; }
.actions { display: flex; flex-direction: column; gap: 13px; padding: 7px 1px 0 6px; }
.btn { height: 31px; border: 1px solid #a2a4a2; border-bottom: 2px solid #8e908e; border-radius: 2px; background: linear-gradient(#f6f6f6, #e2e4e2); white-space: nowrap; }
.btn.default { border-color: #777; border-bottom-color: #444; }
hr { margin: 0 -5px; border: 0; height: 1px; background: #b4b6b4; }
.options + hr { margin-top: 13px; }
.checks { padding: 8px 3px; }
.checks label { display: flex; align-items: center; gap: 7px; height: 28px; }
.file-label { display: block; padding-top: 5px; height: 23px; }
.file-row { display: flex; gap: 12px; padding: 0 1px; }
.file-row input { flex: 1; min-width: 0; height: 29px; padding: 0 4px; border: 1px solid #b8bab8; border-top-color: #888; border-radius: 2px; background: #fcfcfc; }
.file-row .btn { width: 56px; height: 29px; }
.messages { margin-top: 6px; padding: 0 5px 7px 5px; }
.messages legend { margin-left: -2px; }
.log { position: relative; height: 150px; margin-top: 4px; display: flex; background: #fafafa; overflow: hidden; }
.log-text { flex: 1; padding: 11px 0 0 10px; font: 11px/15px "DejaVu Sans", sans-serif; white-space: nowrap; }
.log-text .tight { line-height: 13px; }
.info { color: #808080; }
.error b { color: #f00; }
.action { color: #006400; }
.log-scroll { width: 15px; border-left: 1px solid #c4c6c4; background: linear-gradient(90deg, #fafafa, #ebedeb); padding: 6px 5px; }
.log-scroll i { display: block; height: 138px; width: 4px; border-radius: 2px; background: linear-gradient(#757877 36px, #d0d2d0 36px); }
.ibeam { position: absolute; left: 431px; top: 56px; width: 8px; height: 20px; }
.filter { display: flex; align-items: center; margin-top: 6px; }
.filter span { width: 47px; }
.filter label { margin-right: 16px; height: 31px; gap: 7px; }
.filter .off { color: #aaaeaa; }
.filter .btn { width: 129px; margin-left: auto; }
```
FILE: grid.js
```js
// Draws the 50 mil grid dots over the whole board view.
const pitch = 9.828;
const view = document.getElementById("grid");
function drawGrid() {
  view.width = view.clientWidth;
  view.height = view.clientHeight;
  const ctx = view.getContext("2d");
  ctx.fillStyle = "#848484";
  for (let y = 1; y < view.height; y += pitch) {
    for (let x = 5; x < view.width; x += pitch) {
      ctx.fillRect(Math.round(x), Math.round(y), 1, 1);
    }
  }
}
window.addEventListener("resize", drawGrid);
drawGrid();
```
